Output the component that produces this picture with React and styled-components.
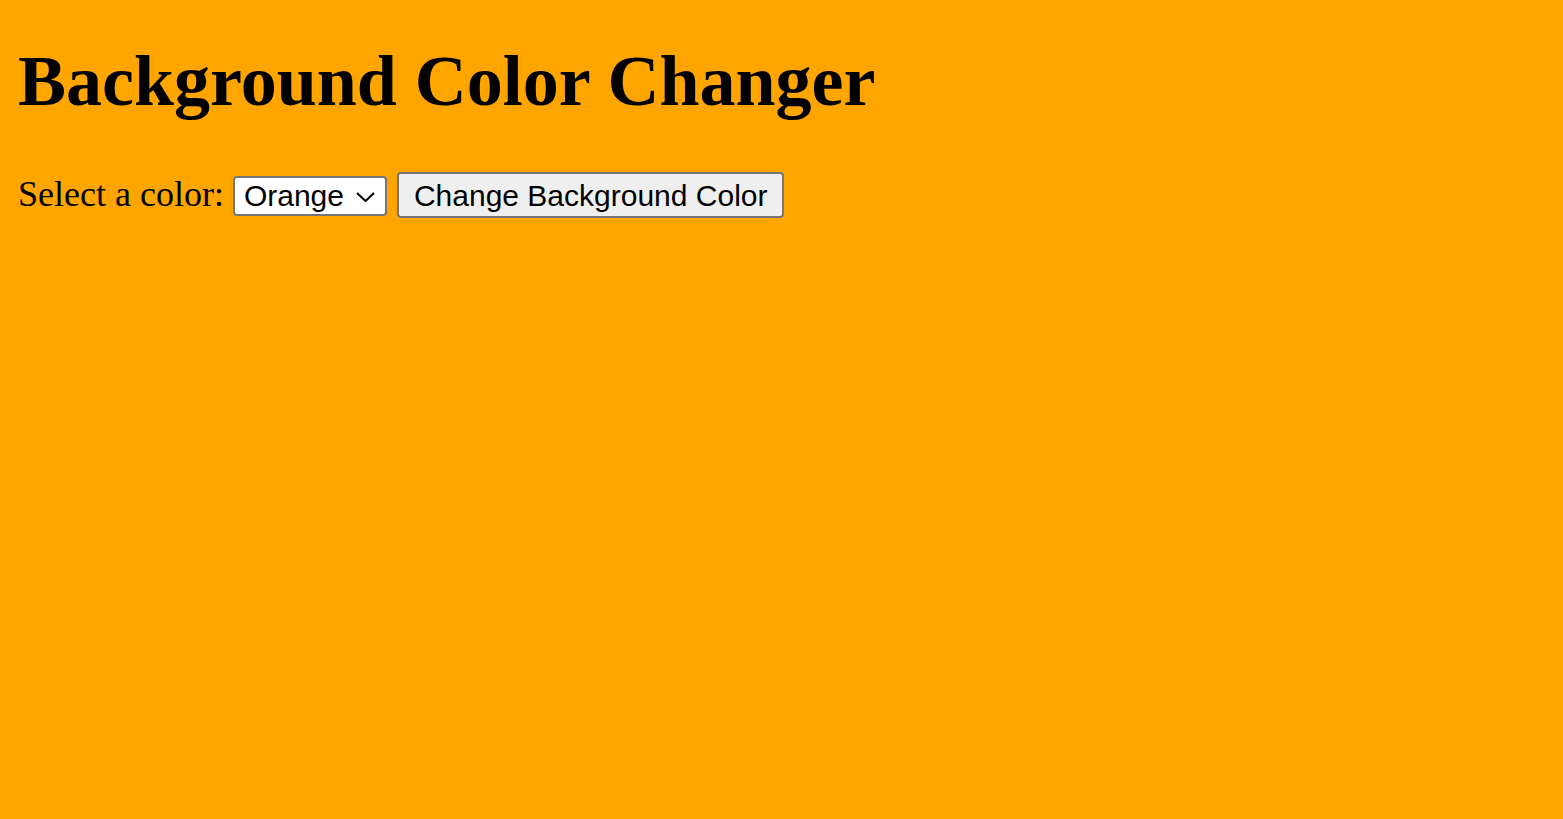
import React, { useState } from "react";
import styled, { createGlobalStyle } from "styled-components";

const GlobalStyle = createGlobalStyle`
  html, body {
    margin: 0;
    padding: 0;
    background: ${(p) => p.$bg};
  }
  body {
    min-height: 100vh;
    font-family: "Liberation Serif", "Times New Roman", serif;
    color: #000;
  }
`;

const Page = styled.main`
  padding: 41px 18px 0;
`;

const Title = styled.h1`
  margin: 0;
  font-family: "Liberation Serif", "Times New Roman", serif;
  font-size: 72px;
  font-weight: 700;
  line-height: 80px;
`;

const Controls = styled.div`
  display: flex;
  align-items: baseline;
  gap: 9px;
  margin-top: 51px;
`;

const Label = styled.label`
  font-family: "Liberation Serif", "Times New Roman", serif;
  font-size: 36px;
  line-height: normal;
`;

const SelectWrap = styled.span`
  position: relative;
  display: inline-flex;
`;

const Select = styled.select`
  appearance: none;
  -webkit-appearance: none;
  box-sizing: border-box;
  width: 154px;
  height: 40px;
  margin: 0;
  padding: 0 40px 0 9px;
  border: 2px solid #767676;
  border-radius: 4px;
  background: #fff;
  color: #000;
  font-family: "Liberation Sans", Arial, sans-serif;
  font-size: 30px;
  line-height: normal;
  outline: none;
`;

const Chevron = styled.svg`
  position: absolute;
  right: 12px;
  top: 16px;
  width: 19px;
  height: 10px;
  pointer-events: none;
`;

const Button = styled.button`
  box-sizing: border-box;
  height: 46px;
  margin: 0 0 0 1px;
  padding: 2px 15px 0;
  border: 2px solid #767676;
  border-radius: 4px;
  background: #efefef;
  color: #000;
  font-family: "Liberation Sans", Arial, sans-serif;
  font-size: 30px;
  line-height: normal;
  cursor: pointer;
`;

const colors = [
  { name: "Orange", value: "orange" },
  { name: "Red", value: "red" },
  { name: "Green", value: "green" },
  { name: "Blue", value: "blue" },
  { name: "Yellow", value: "yellow" },
];

export default function App() {
  const [choice, setChoice] = useState("orange");
  const [bg, setBg] = useState("orange");

  return (
    <>
      <GlobalStyle $bg={bg} />
      <Page>
        <Title>Background Color Changer</Title>
        <Controls>
          <Label htmlFor="color-select">Select a color:</Label>
          <SelectWrap>
            <Select
              id="color-select"
              value={choice}
              onChange={(e) => setChoice(e.target.value)}
            >
              {colors.map((c) => (
                <option key={c.value} value={c.value}>
                  {c.name}
                </option>
              ))}
            </Select>
            <Chevron viewBox="0 0 19 10" fill="none">
              <path
                d="M1 1 L9.5 9 L18 1"
                stroke="#000"
                strokeWidth="2"
                strokeLinecap="butt"
                strokeLinejoin="miter"
              />
            </Chevron>
          </SelectWrap>
          <Button onClick={() => setBg(choice)}>Change Background Color</Button>
        </Controls>
      </Page>
    </>
  );
}
